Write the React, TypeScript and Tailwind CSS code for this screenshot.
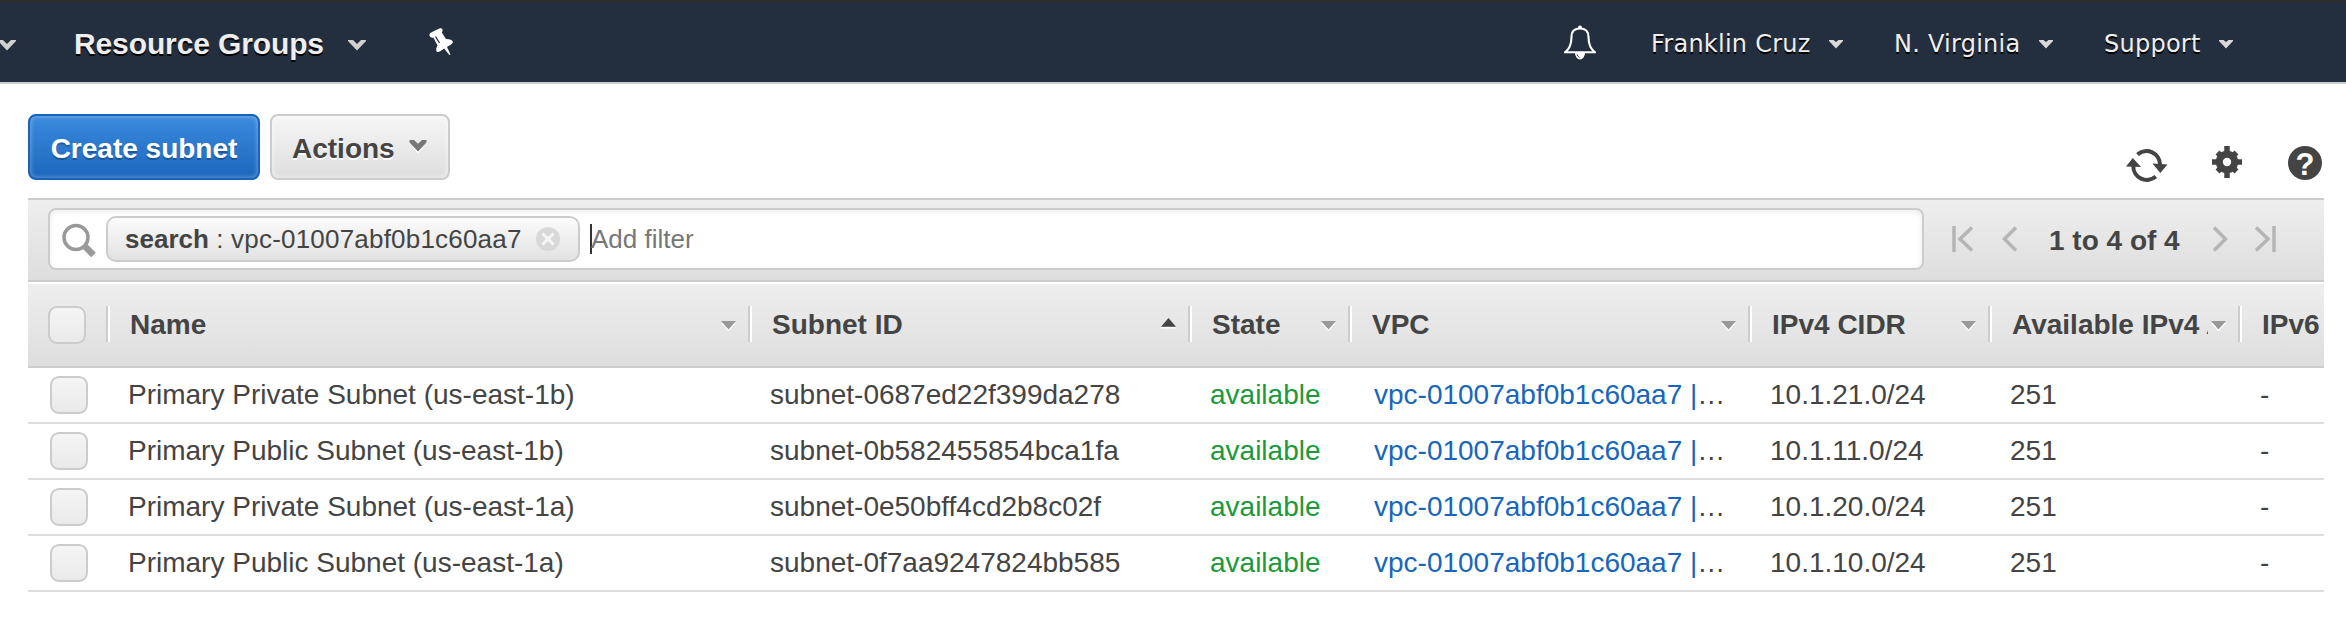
import type { ReactNode } from 'react';

type Column = { title: string; width: string; sort: 'up' | 'down' | null };

const columns: Column[] = [
  { title: 'Name', width: 'w-[642px]', sort: 'down' },
  { title: 'Subnet ID', width: 'w-[440px]', sort: 'up' },
  { title: 'State', width: 'w-[160px]', sort: 'down' },
  { title: 'VPC', width: 'w-[400px]', sort: 'down' },
  { title: 'IPv4 CIDR', width: 'w-[240px]', sort: 'down' },
  { title: 'Available IPv4 A', width: 'w-[250px]', sort: 'down' },
  { title: 'IPv6', width: 'w-[86px]', sort: null },
];

const rows = [
  { name: 'Primary Private Subnet (us-east-1b)', id: 'subnet-0687ed22f399da278', cidr: '10.1.21.0/24' },
  { name: 'Primary Public Subnet (us-east-1b)', id: 'subnet-0b582455854bca1fa', cidr: '10.1.11.0/24' },
  { name: 'Primary Private Subnet (us-east-1a)', id: 'subnet-0e50bff4cd2b8c02f', cidr: '10.1.20.0/24' },
  { name: 'Primary Public Subnet (us-east-1a)', id: 'subnet-0f7aa9247824bb585', cidr: '10.1.10.0/24' },
];

function NavCaret() {
  return (
    <svg className="h-[11px] w-[18px] shrink-0" viewBox="0 0 18 11">
      <path d="M0 0H5L9 4L13 0H18V1L9 10.500L0 1Z" fill="#d0d0d0" />
    </svg>
  );
}

function MenuCaret() {
  return (
    <svg className="h-[9px] w-[14px] shrink-0" viewBox="0 0 14 9">
      <path d="M0 0H4.500L7 2L9.500 0H14V1L7 8.500L0 1Z" fill="#d8d8d8" />
    </svg>
  );
}

function SortArrow({ dir }: { dir: 'up' | 'down' }) {
  return dir === 'up' ? (
    <svg className="h-[11px] w-[15px] shrink-0" viewBox="0 0 15 11">
      <path d="M0 10.5V9H15V10.5Z" fill="#fff" />
      <path d="M7.5 0L15 8.7H0Z" fill="#444" />
    </svg>
  ) : (
    <svg className="h-[11px] w-[15px] shrink-0" viewBox="0 0 15 11">
      <path d="M0 2H15L7.5 10.5Z" fill="#fff" />
      <path d="M0 0H15L7.5 8.5Z" fill="#999" />
    </svg>
  );
}

function Checkbox() {
  return (
    <span className="block size-[38px] shrink-0 rounded-[9px] border-2 border-[#ccc] bg-linear-to-b from-[#f5f5f5] to-[#eaeaea]" />
  );
}

function MenuItem({ label, width }: { label: string; width: string }) {
  return (
    <span className={`flex shrink-0 items-center justify-between ${width}`}>
      <span className="pt-[4px] font-['DejaVu_Sans',sans-serif] text-[24px] leading-[30px] tracking-[0.25px] whitespace-nowrap text-[#eee] [text-shadow:0_2px_0_#000]">
        {label}
      </span>
      <span className="flex pt-[5px]">
        <MenuCaret />
      </span>
    </span>
  );
}

function Cell({ width, children, className = 'pl-[22px]' }: { width: string; children: ReactNode; className?: string }) {
  return <div className={`shrink-0 overflow-hidden text-ellipsis whitespace-nowrap ${width} ${className}`}>{children}</div>;
}

export default function App() {
  return (
    <div className="h-[640px] w-[2346px] overflow-hidden bg-white font-['Liberation_Sans',Arial,sans-serif] text-[28px] text-[#444]">
      <header className="flex h-[84px] items-center border-t-2 border-b-2 border-t-[#2d2d2d] border-b-[#ccc] bg-[#232f3e]">
        <span className="-ml-[2px] flex pt-[7px]">
          <NavCaret />
        </span>
        <span className="ml-[58px] w-[252px] pt-[4px] text-[30px] leading-[36px] font-bold tracking-[-0.12px] whitespace-nowrap text-[#eee] [text-shadow:0_2px_0_#000]">
          Resource Groups
        </span>
        <span className="ml-[22px] flex pt-[7px]">
          <NavCaret />
        </span>
        <svg className="ml-[63px] h-[28px] w-[24px]" viewBox="0 0 24 28">
          <path
            d="M0.500 7.500C0 5.500 2 4.500 5 3L11 0.300C13.500 -0.500 14.500 2.500 12.800 4.500L17 11C20 10.800 23 11.500 24 14C23.500 16 20.500 17.500 18 19L21.500 26.500L20.300 27L15.200 20.500C12.500 22.500 9.500 24.500 8 24C6.500 22 7.500 19.500 8.500 17.500L4.500 9.800C2.500 9.800 0.800 9.300 0.500 7.500Z"
            fill="#fff"
          />
          <path d="M6.500 8.500L10.500 15" stroke="#232f3e" strokeWidth="1.300" />
        </svg>
        <svg className="ml-auto h-[36px] w-[32px]" viewBox="0 0 32 36">
          <path
            d="M7.500 13C7.500 7 10.500 4.500 16 4.500S24.500 7 24.500 13C24.500 21 26.500 25 31 28.300H1C5.500 25 7.500 21 7.500 13Z"
            fill="none"
            stroke="#fff"
            strokeWidth="2.100"
            strokeLinejoin="round"
          />
          <path d="M14 4V3.500a2 2 0 0 1 4 0V4ZM11 29H21A5 6.500 0 0 1 11 29Z" fill="#fff" />
          <path d="M13 30.500Q13.500 32.500 15.500 33.500" fill="none" stroke="#232f3e" strokeWidth="0.900" />
        </svg>
        <div className="ml-[54px] flex w-[696px] items-center gap-[51px] pl-px">
          <MenuItem label="Franklin Cruz" width="w-[192px]" />
          <MenuItem label="N. Virginia" width="w-[159px]" />
          <MenuItem label="Support" width="w-[129px]" />
        </div>
      </header>

      <section className="flex h-[114px] items-start pt-[30px] pl-[28px]">
        <button className="flex h-[66px] w-[232px] items-center justify-center rounded-[8px] border-2 border-[#1a63b8] bg-linear-to-b from-[#3a8ade] to-[#1b67bd] pt-[3px] font-bold whitespace-nowrap text-white shadow-[inset_0_0_4px_1px_rgba(255,255,255,0.3)] [text-shadow:0_2px_0_rgba(0,0,0,0.25)]">
          Create subnet
        </button>
        <button className="ml-[10px] flex h-[66px] w-[180px] items-center rounded-[8px] border-2 border-[#ccc] bg-linear-to-b from-[#f6f6f6] to-[#dedede] pt-[3px] pl-[20px] font-bold whitespace-nowrap shadow-[inset_0_0_4px_1px_rgba(255,255,255,0.5)] [text-shadow:0_2px_0_#fff]">
          Actions
          <svg className="-mt-[5px] ml-[13px] h-[15px] w-[20px]" viewBox="0 0 20 15">
            <path d="M0.500 3H6.500L10 6.500L13.500 3H19.500L10 14.500Z" fill="#fff" />
            <path d="M1.500 1H6L10 4.800L14 1H18.500V3.500L10 12.500L1.500 3.500Z" fill="#777" />
          </svg>
        </button>
        <div className="mt-[30px] ml-auto flex items-start">
          <svg className="mt-[5px] h-[34px] w-[42px]" viewBox="0 0 42 34">
            <path d="M11.500 5.500A13.500 13.500 0 0 1 34 16" fill="none" stroke="#444" strokeWidth="4" />
            <path d="M29.800 27.500A13.500 13.500 0 0 1 7.300 17" fill="none" stroke="#444" strokeWidth="4" />
            <path d="M26.500 14.500L41.500 15.500L34.300 24ZM0 17.500L15 18L6.800 9Z" fill="#444" strokeLinejoin="round" />
          </svg>
          <svg className="ml-[44px] mt-[2px] h-[32px] w-[30px]" viewBox="0 0 30 32">
            <circle cx="15" cy="16" r="7.700" fill="none" stroke="#444" strokeWidth="7" />
            <path d="M15 0V9M15 23V32M0 16H8M22 16H30" stroke="#444" strokeWidth="5.500" />
            <path d="M5.500 6.500L9.500 10.500M24.500 6.500L20.500 10.500M5.500 25.500L9.500 21.500M24.500 25.500L20.500 21.500" stroke="#444" strokeWidth="5.500" />
          </svg>
          <span className="mt-[2px] mr-[24px] ml-[46px] flex size-[34px] items-center justify-center rounded-full bg-[#444] pt-[2px] text-[31px] leading-none font-bold text-white">
            ?
          </span>
        </div>
      </section>

      <main className="ml-[28px] w-[2296px] overflow-hidden">
        <div className="flex h-[84px] items-start border-t-2 border-b-2 border-[#ccc] bg-linear-to-b from-[#eee] to-[#dedede] pt-[8px] pl-[20px]">
          <div className="flex h-[62px] w-[1876px] items-center rounded-[8px] border-2 border-[#ccc] bg-white pl-[12px] text-[26px] shadow-[inset_0_2px_6px_rgba(0,0,0,0.08)]">
            <svg className="mt-[4px] h-[36px] w-[35px]" viewBox="0 0 35 36">
              <circle cx="14" cy="14.500" r="12" fill="none" stroke="#999" strokeWidth="3.500" />
              <path d="M22.500 23L31.500 32" stroke="#999" strokeWidth="6.500" />
            </svg>
            <div className="ml-[9px] flex h-[46px] w-[222px] shrink-0 grow-0 basis-[222px] items-center rounded-[10px] border-2 border-[#ccc] bg-linear-to-b from-[#fbfbfb] to-[#e2e2e2] pl-[17px] whitespace-pre min-w-[474px]">
              <b>search</b>
              <span className="tracking-[0.2px]"> : vpc-01007abf0b1c60aa7</span>
              <svg className="ml-[14px] size-[24px]" viewBox="0 0 24 24">
                <circle cx="12" cy="12" r="12" fill="#d8d8d8" />
                <path d="M6.500 6.500L17.500 17.500M17.500 6.500L6.500 17.500" stroke="#f6f6f6" strokeWidth="3" />
              </svg>
            </div>
            <span className="ml-[10px] h-[30px] w-[2px] bg-[#333]" />
            <span className="-ml-[1px] text-[#777]">Add filter</span>
          </div>
          <div className="flex h-[62px] items-center">
            <svg className="ml-[28px] h-[26px] w-[21px]" viewBox="0 0 21 26">
              <path d="M2 0V26M20 1.500L8 13L20 24.500" fill="none" stroke="#b5b5b5" strokeWidth="3.500" />
            </svg>
            <svg className="ml-[29px] h-[26px] w-[15px]" viewBox="0 0 15 26">
              <path d="M14 1.500L2.500 13L14 24.500" fill="none" stroke="#b5b5b5" strokeWidth="3.500" />
            </svg>
            <span className="ml-[32px] pt-[4px] font-bold whitespace-nowrap">1 to 4 of 4</span>
            <svg className="ml-[33px] h-[26px] w-[15px]" viewBox="0 0 15 26">
              <path d="M1 1.500L12.500 13L1 24.500" fill="none" stroke="#b5b5b5" strokeWidth="3.500" />
            </svg>
            <svg className="ml-[27px] h-[26px] w-[21px]" viewBox="0 0 21 26">
              <path d="M19 0V26M1 1.500L13 13L1 24.500" fill="none" stroke="#b5b5b5" strokeWidth="3.500" />
            </svg>
          </div>
        </div>

        <div className="flex h-[86px] items-start border-t-2 border-b-2 border-t-white border-b-[#ccc] bg-linear-to-b from-[#eee] to-[#dedede] pt-[22px] pl-[20px]">
          <div className="w-[58px] shrink-0">
            <Checkbox />
          </div>
          {columns.map((c) => (
            <div key={c.title} className={`flex h-[36px] shrink-0 items-center ${c.width}`}>
              <span className="h-[36px] w-[4px] shrink-0 border-r-2 border-l-2 border-r-white border-l-[#ccc]" />
              <span className="ml-[20px] min-w-0 flex-1 overflow-hidden pt-[2px] leading-[36px] font-bold whitespace-nowrap">
                {c.title}
              </span>
              {c.sort && (
                <span className={c.sort === 'up' ? 'mr-[12px] flex pb-[2px]' : 'mr-[12px] ml-[3px] flex pt-[4px]'}>
                  <SortArrow dir={c.sort} />
                </span>
              )}
            </div>
          ))}
        </div>

        {rows.map((r) => (
          <div key={r.id} className="flex h-[56px] items-center border-b-2 border-[#ddd]">
            <div className="w-[78px] shrink-0 pl-[22px]">
              <Checkbox />
            </div>
            <Cell width="w-[642px]">{r.name}</Cell>
            <Cell width="w-[440px]">{r.id}</Cell>
            <Cell width="w-[160px]">
              <span className="text-[#1a9a3a]">available</span>
            </Cell>
            <Cell width="w-[400px]" className="pr-[20px] pl-[26px]">
              <a className="text-[#1766bb]">vpc-01007abf0b1c60aa7 |</a>…
            </Cell>
            <Cell width="w-[240px]">{r.cidr}</Cell>
            <Cell width="w-[250px]">251</Cell>
            <Cell width="w-[86px]">-</Cell>
          </div>
        ))}
      </main>
    </div>
  );
}
